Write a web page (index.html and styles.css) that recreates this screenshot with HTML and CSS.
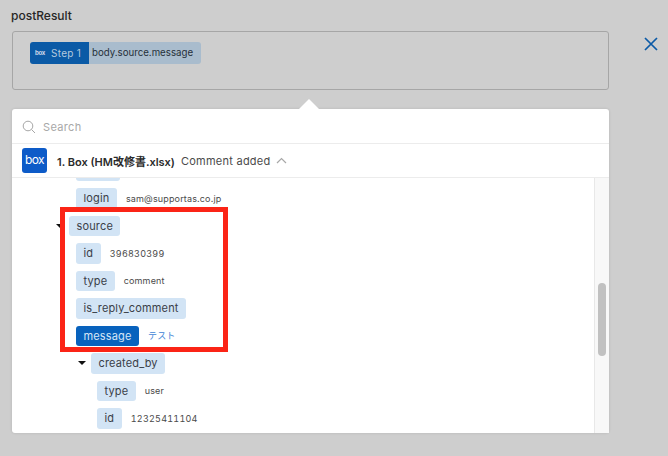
FILE: index.html
```html
<!DOCTYPE html>
<html lang="ja">
<head>
<meta charset="utf-8">
<title>postResult</title>
<link rel="stylesheet" href="styles.css">
</head>
<body>
<div class="page">
  <div class="main">
    <div class="label">postResult</div>
    <div class="input">
      <div class="token">
        <span class="token-step">
          <span class="token-logo">box</span>
          <span class="token-name">Step 1</span>
        </span>
        <span class="token-path">body.source.message</span>
      </div>
    </div>
    <div class="panel">
      <span class="arrow"></span>
      <div class="search">
        <svg class="search-icon" width="14" height="14" viewBox="0 0 14 14"><circle cx="6" cy="6" r="4.8" fill="none" stroke="#a6a6a6" stroke-width="1"/><path d="M9.5 9.5L13 13" stroke="#a6a6a6" stroke-width="1" fill="none"/></svg>
        <span class="search-text">Search</span>
      </div>
      <div class="app-row">
        <span class="app-logo">box</span>
        <span class="app-name">1. Box (HM改修書.xlsx)</span>
        <span class="app-event">Comment added</span>
        <svg class="chevron" width="11" height="7" viewBox="0 0 11 7"><path d="M1 6L5.5 1.5L10 6" fill="none" stroke="#a8a8a8" stroke-width="1.2"/></svg>
      </div>
      <div class="body">
        <div class="tree">
          <div class="row row-clip lvl-1"><span class="pill pill-blank"></span></div>
          <div class="row lvl-1"><span class="pill">login</span><span class="val">sam@supportas.co.jp</span></div>
          <div class="row lvl-0"><span class="caret"></span><span class="pill">source</span></div>
          <div class="row lvl-1"><span class="pill">id</span><span class="val val-num">396830399</span></div>
          <div class="row lvl-1"><span class="pill">type</span><span class="val">comment</span></div>
          <div class="row lvl-1"><span class="pill">is_reply_comment</span></div>
          <div class="row lvl-1"><span class="pill pill-on">message</span><span class="val val-on">テスト</span></div>
          <div class="row lvl-2"><span class="caret"></span><span class="pill">created_by</span></div>
          <div class="row lvl-3"><span class="pill">type</span><span class="val">user</span></div>
          <div class="row lvl-3"><span class="pill">id</span><span class="val val-num">12325411104</span></div>
        </div>
        <div class="scrollbar"><span class="thumb"></span></div>
      </div>
    </div>
    <div class="highlight"></div>
  </div>
  <svg class="close" width="14" height="14" viewBox="0 0 14 14"><path d="M1 1L13 13M13 1L1 13" stroke="#0b5aa6" stroke-width="1.7" fill="none"/></svg>
</div>
</body>
</html>
```
FILE: styles.css
```css
* { box-sizing: border-box; }
html, body { margin: 0; height: 100%; }
body {
  background: #cecece;
  font-family: Inter, "Noto Sans CJK JP", sans-serif;
  color: #2f3236;
  overflow: hidden;
}
.page {
  display: flex;
  align-items: flex-start;
  padding: 9px 0 0 12px;
  height: 456px;
}
.main { width: 597px; position: relative; }
.label {
  font-size: 12px;
  font-weight: 500;
  line-height: 14px;
  color: #262626;
  margin: 0 0 8px -1px;
}
.input {
  display: flex;
  align-items: flex-start;
  height: 59px;
  border: 1px solid #a6a6a6;
  border-radius: 3px;
  padding: 10px 0 0 17px;
}
.token {
  display: flex;
  height: 22px;
  font-size: 10px;
  line-height: 22px;
  border-radius: 3px;
  overflow: hidden;
}
.token-step {
  display: flex;
  align-items: center;
  background: #0b5aa6;
  color: #b4c9de;
  padding-left: 5px;
  width: 59px;
  letter-spacing: 0.3px;
  white-space: nowrap;
}
.token-logo {
  font-size: 6px;
  font-weight: 700;
  color: #cfdcea;
  width: 12px;
  margin-right: 4px;
  letter-spacing: -0.3px;
}
.token-path {
  background: #a9bccd;
  color: #26303a;
  padding-left: 3px;
  width: 112px;
  font-size: 9.7px;
  white-space: nowrap;
}
.panel {
  position: relative;
  margin-top: 19px;
  height: 324px;
  background: #fff;
  border-radius: 3px;
  box-shadow: 0 0 3px rgba(0,0,0,.12);
  display: flex;
  flex-direction: column;
}
.arrow {
  position: absolute;
  left: 287px;
  top: -10px;
  width: 0;
  height: 0;
  border-left: 10px solid transparent;
  border-right: 10px solid transparent;
  border-bottom: 10px solid #fff;
}
.search {
  height: 35px;
  display: flex;
  align-items: center;
  padding: 2px 0 0 10px;
  border-bottom: 1px solid #ececec;
  flex: none;
}
.search-icon { margin-top: -1px; }
.search-text {
  font-size: 11px;
  color: #a8a8a8;
  margin-left: 7px;
  letter-spacing: 0.35px;
}
.app-row {
  height: 34px;
  display: flex;
  align-items: center;
  padding-left: 10px;
  border-bottom: 1px solid #ececec;
  flex: none;
}
.app-logo {
  width: 25px;
  height: 25px;
  background: #0d5bc8;
  border-radius: 3px;
  color: #fff;
  font-size: 12px;
  font-weight: 400;
  text-align: center;
  line-height: 24px;
  letter-spacing: -0.6px;
  margin-right: 10px;
}
.app-name {
  font-size: 11px;
  font-weight: 600;
  color: #2b2b2b;
  margin-right: 6px;
  white-space: nowrap;
}
.app-event {
  font-size: 11px;
  color: #4a4a4a;
  margin-right: 5px;
  letter-spacing: 0.25px;
  white-space: nowrap;
}
.body {
  flex: 1;
  display: flex;
  min-height: 0;
}
.tree {
  flex: 1;
  overflow: hidden;
  display: flex;
  flex-direction: column;
  gap: 7px;
}
.scrollbar {
  width: 15px;
  background: #f8f8f8;
  border-left: 1px solid #e8e8e8;
  flex: none;
  padding: 105px 0 0 3px;
}
.thumb {
  display: block;
  width: 8px;
  height: 73px;
  border-radius: 4px;
  background: #c1c1c1;
}
.row {
  display: flex;
  align-items: center;
  height: 20.5px;
  position: relative;
  flex: none;
}
.row-clip { height: 3px; overflow: hidden; align-items: flex-end; }
.pill {
  display: inline-block;
  height: 20.5px;
  line-height: 20px;
  padding: 0 7.5px;
  font-size: 11px;
  letter-spacing: 0.15px;
  background: #d2e4f5;
  color: #3a4048;
  border-radius: 3px;
  white-space: nowrap;
}
.pill-blank { width: 44px; }
.pill-on { background: #0862bd; color: #d6e6f7; }
.val {
  font-size: 9px;
  color: #4a4a4a;
  margin-left: 9px;
  letter-spacing: 0.15px;
  white-space: nowrap;
}
.val-num {
  font-variant-numeric: tabular-nums;
  letter-spacing: 0.25px;
}
.val-on { color: #3f86d6; }
.lvl-0 { padding-left: 57px; }
.lvl-1 { padding-left: 64px; }
.lvl-2 { padding-left: 79px; }
.lvl-3 { padding-left: 85px; }
.caret {
  position: absolute;
  width: 0;
  height: 0;
  border-left: 4px solid transparent;
  border-right: 4px solid transparent;
  border-top: 4px solid #111;
  margin-left: -13px;
}
.highlight {
  position: absolute;
  left: 48px;
  top: 198px;
  width: 168px;
  height: 145px;
  border: 5px solid #fb2416;
  pointer-events: none;
}
.close { margin: 28px 0 0 35px; flex: none; }
```
